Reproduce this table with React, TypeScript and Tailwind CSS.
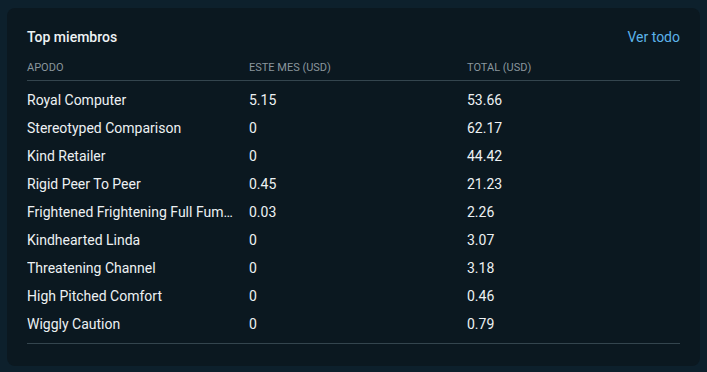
const members = [
  { name: "Royal Computer", month: "5.15", total: "53.66" },
  { name: "Stereotyped Comparison", month: "0", total: "62.17" },
  { name: "Kind Retailer", month: "0", total: "44.42" },
  { name: "Rigid Peer To Peer", month: "0.45", total: "21.23" },
  { name: "Frightened Frightening Full Fumble", month: "0.03", total: "2.26" },
  { name: "Kindhearted Linda", month: "0", total: "3.07" },
  { name: "Threatening Channel", month: "0", total: "3.18" },
  { name: "High Pitched Comfort", month: "0", total: "0.46" },
  { name: "Wiggly Caution", month: "0", total: "0.79" },
];

export default function App() {
  return (
    <div className="h-[372px] w-[707px] bg-[#0d202c] px-[7px] pt-[8px] pb-[6px] font-['Roboto',sans-serif]">
      <section className="h-[358px] rounded-lg bg-[#0b1820] px-5 pt-[21px]">
        <header className="flex h-[16px] items-center justify-between">
          <h2 className="text-[14px] font-medium text-[#eef2f4]">Top miembros</h2>
          <a href="#" className="text-[14px] text-[#5cb3ea]">Ver todo</a>
        </header>

        <div className="mt-[13px] grid h-[23px] grid-cols-[222px_218px_1fr] items-center border-b border-[#34454e] pb-px text-[11px] uppercase text-[#8a969d]">
          <span>Apodo</span>
          <span>Este mes (USD)</span>
          <span>Total (USD)</span>
        </div>

        <div className="border-b border-[#34454e] py-[5px]">
          {members.map((m) => (
            <div
              key={m.name}
              className="grid h-[28px] grid-cols-[222px_218px_1fr] items-center text-[14px] text-[#edf1f3]"
            >
              <span className="truncate pr-[10px]">{m.name}</span>
              <span>{m.month}</span>
              <span>{m.total}</span>
            </div>
          ))}
        </div>
      </section>
    </div>
  );
}
